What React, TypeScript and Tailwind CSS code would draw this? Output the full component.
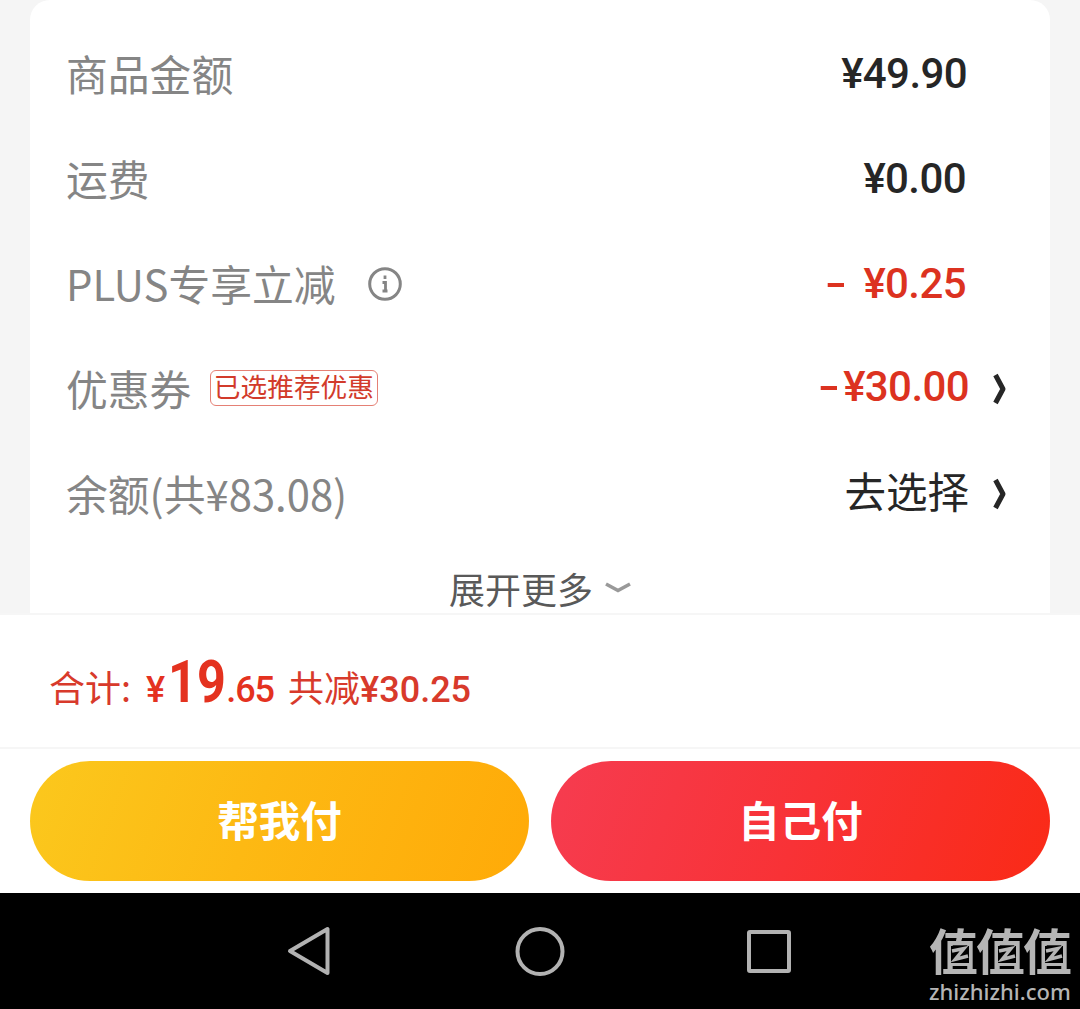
import type { ReactNode } from 'react';

const Chevron = () => (
  <svg className="h-8 w-4 shrink-0" viewBox="0 0 16 32" fill="none" stroke="#262626" strokeWidth="5" strokeLinejoin="round">
    <path d="M3.500 2L11 16L3.500 30" />
  </svg>
);

const Row = ({ label, children }: { label: ReactNode; children: ReactNode }) => (
  <div className="flex h-[105px] items-center justify-between pl-9 pr-[42px] text-[41.8px] leading-[60px] text-[#858585]">
    <div className="flex items-center whitespace-nowrap pb-1">{label}</div>
    <div className="flex items-center whitespace-nowrap pb-0.5 text-[#262626]">{children}</div>
  </div>
);

const Price = ({ children, className = '' }: { children: ReactNode; className?: string }) => (
  <span className={`font-['Roboto'] text-[42px] font-medium tracking-[-0.6px] ${className}`}>{children}</span>
);

const Minus = ({ className = '' }: { className?: string }) => (
  <span className={`inline-block origin-right scale-x-150 ${className}`}>-</span>
);

const LogoChar = () => (
  <span className="relative block h-[50px] w-[47px]">
    值
    <svg className="absolute left-[22px] top-[25px] h-[17px] w-[18px] bg-black" viewBox="0 0 18 17" fill="none" stroke="#b5b5b5" strokeWidth="3.4">
      <path d="M1 5L13 2.500L4 13.500L17 10" />
    </svg>
  </span>
);

const App = () => (
  <div className="flex h-[1009px] w-[1080px] flex-col overflow-hidden bg-white font-['Noto_Sans_CJK_SC',sans-serif]">
    <div className="h-[613px] shrink-0 bg-[#f5f5f5] px-[30px]">
      <div className="h-full overflow-hidden rounded-t-[20px] bg-white pt-[22px]">
        <Row label="商品金额">
          <Price className="mr-[41px]">¥49.90</Price>
        </Row>
        <Row label="运费">
          <Price className="mr-[42px]">¥0.00</Price>
        </Row>
        <Row
          label={
            <>
              PLUS专享立减
              <svg className="ml-[31px] mt-0.5 h-9 w-9" viewBox="0 0 36 36" fill="none" stroke="#858585" strokeWidth="3">
                <circle cx="18" cy="18" r="15.3" />
                <path d="M18 9.500v3.500M15.500 16.500H18.500v9M15.500 25h5" strokeWidth="2.8" />
              </svg>
            </>
          }
        >
          <Price className="mr-[42px] text-[#dc3220]">
            <Minus className="mr-[18px]" />¥0.25
          </Price>
        </Row>
        <Row
          label={
            <>
              优惠券
              <span className="ml-[18.5px] flex h-9 w-[168px] items-center justify-center rounded-[6px] border border-[#e58075] pb-1 text-[26.7px] leading-9 text-[#d23b2b]">
                已选推荐优惠
              </span>
            </>
          }
        >
          <Price className="mr-[23px] pb-1 text-[#dc3220]">
            <Minus className="mr-1" />¥30.00
          </Price>
          <Chevron />
        </Row>
        <Row label="余额(共¥83.08)">
          <span className="mr-[23px] pb-2 text-[41.5px]">去选择</span>
          <Chevron />
        </Row>
        <div className="flex h-[66px] items-center justify-center pt-4 text-[36px] leading-[50px] text-[#595959]">
          展开更多
          <svg className="ml-3 h-[14px] w-[26px]" viewBox="0 0 26 14" fill="none" stroke="#999" strokeWidth="3.6">
            <path d="M1 3L13 9.500L25 3" />
          </svg>
        </div>
      </div>
    </div>

    <div className="flex h-[136px] shrink-0 items-baseline whitespace-nowrap border-y-2 border-[#f6f6f6] pl-[49px] pt-[27px] text-[36px] leading-[80px] text-[#d83a2b]">
      <span>合计:</span>
      <span className="ml-[15px] font-['Roboto'] font-medium text-[#e4321f]">¥</span>
      <span className="ml-[3px] inline-block w-[58px] origin-left scale-x-[0.84] font-['Roboto'] text-[60px] font-bold text-[#e4321f]">19</span>
      <span className="font-['Roboto'] font-medium tracking-[-1px] text-[#e4321f]">.65</span>
      <span className="ml-[14px]">共减</span>
      <span className="font-['Roboto'] font-medium">¥30.25</span>
    </div>

    <div className="flex h-[144px] shrink-0 gap-[22px] px-[30px] pt-3 text-[41.5px] font-bold leading-[60px] text-white">
      <button className="h-[120px] flex-1 rounded-full bg-[linear-gradient(110deg,#fbc81d,#fdb913_45%,#ffaa08)] pb-1">帮我付</button>
      <button className="h-[120px] flex-1 rounded-full bg-[linear-gradient(110deg,#f63c50,#f83236_50%,#fa2a16)] pb-1">自己付</button>
    </div>

    <div className="relative h-[116px] shrink-0 bg-black">
      <div className="flex h-full items-center justify-center text-[#b2b2b2]">
        <svg className="h-[58px] w-[520px]" viewBox="280 922 520 58" fill="none" stroke="currentColor" strokeWidth="4" strokeLinejoin="round">
          <path d="M290 951L327.500 929V973Z" />
          <circle cx="540" cy="951.500" r="22.500" />
          <rect x="749" y="932" width="40" height="39" rx="1" />
        </svg>
      </div>
      <div className="absolute left-[929px] top-[28px] text-[#b5b5b5]">
        <div className="flex text-[49px] font-bold leading-[56px]">
          <LogoChar />
          <LogoChar />
          <LogoChar />
        </div>
        <div className="pt-2 font-['Noto_Sans'] text-[22px] font-medium leading-[24px]">zhizhizhi.com</div>
      </div>
    </div>
  </div>
);

export default App;
